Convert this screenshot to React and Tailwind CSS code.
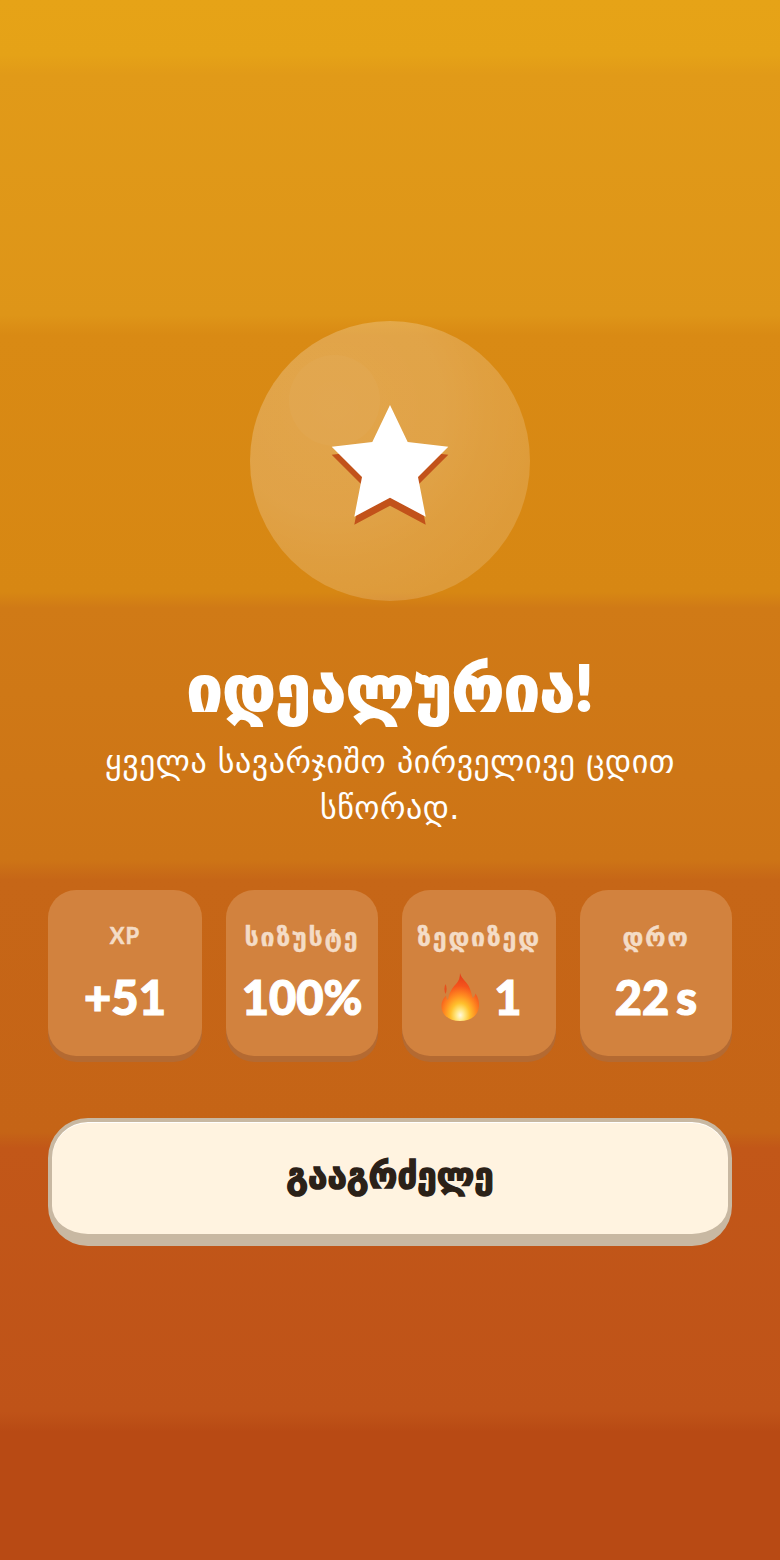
const stats = [
  { label: "XP", latin: true, value: "+51" },
  { label: "სიზუსტე", value: "100%" },
  { label: "ზედიზედ", fire: true, value: "1" },
  { label: "დრო", time: true, value: "22" },
];

function Star() {
  const pts = "58,0 75.7,37 116.3,41.7 86,72 93.7,111.7 58,92.7 22.3,111.7 30,72 -0.3,41.7 40.3,37";
  return (
    <svg width="116" height="122" viewBox="0 0 116 122" className="block overflow-visible">
      <polygon points={pts} fill="#c2521a" transform="translate(0 8)" />
      <polygon points={pts} fill="#ffffff" />
    </svg>
  );
}

function Flame() {
  return (
    <svg width="38" height="48" viewBox="0 0 38 48" className="ml-[5px] mr-[15px] block">
      <defs>
        <radialGradient id="fl" cx="50%" cy="88%" r="85%">
          <stop offset="0%" stopColor="#fff8e0" />
          <stop offset="14%" stopColor="#ffe680" />
          <stop offset="30%" stopColor="#ffc02c" />
          <stop offset="50%" stopColor="#ff8a20" />
          <stop offset="72%" stopColor="#f5541c" />
          <stop offset="100%" stopColor="#e43c18" />
        </radialGradient>
      </defs>
      <path d="M4.5 11 C3 14 3 18 4.5 21 C6 18 6 14 4.5 11 Z" fill="#e8501c" />
      <path
        d="M19 0 C20 6 27 9 29 16 C30.5 20 31 23 31.5 25 C33 24 34 23 34.5 20.5 C37 24 38 28 38 32 C38 42 30 48 19 48 C8 48 0.5 42 0.5 33 C0.5 28 3 25 5 22.5 C5 25 6 26 7 27 C8 20 11 15 15 11 C18 8 19 4 19 0 Z"
        fill="url(#fl)"
      />
    </svg>
  );
}

export default function App() {
  return (
    <div
      className="flex min-h-[1560px] w-[780px] flex-col items-center justify-center bg-[linear-gradient(180deg,#e6a317_0px,#e5a217_55px,#e19a18_75px,#de9518_315px,#d98a14_335px,#d78713_592px,#d07a16_608px,#cd7416_860px,#c66617_880px,#c56416_1132px,#c25718_1148px,#bf5318_1412px,#b84a14_1432px,#b84a14_1560px)] px-12 text-white"
      style={{ fontFamily: '"Lato","DejaVu Sans",sans-serif' }}
    >
      <div className="relative flex h-[280px] w-[280px] items-center justify-center overflow-hidden rounded-full bg-[radial-gradient(circle_at_30%_30%,rgba(255,255,255,0.235)_0%,rgba(255,255,255,0.22)_40%,rgba(255,255,255,0.19)_55%,rgba(255,255,255,0.16)_75%,rgba(255,255,255,0.155)_100%)]">
        <div className="absolute left-[39px] top-[34px] h-[91px] w-[91px] rounded-full bg-white/[0.03]" />
        <div className="relative top-[5px]"><Star /></div>
      </div>
      <h1 className="mt-[42px] text-[63.5px] font-black leading-[88px] [-webkit-text-stroke:2px_white]">იდეალურია!</h1>
      <p className="mt-[8px] max-w-[600px] text-center text-[32px] font-normal leading-[46px] tracking-[0.5px]" style={{ fontFamily: '"DejaVu Sans",sans-serif' }}>
        ყველა სავარჯიშო პირველივე ცდით სწორად.
      </p>
      <div className="mt-[59px] grid w-full grid-cols-[154px_152px_154px_152px] gap-6">
        {stats.map((s) => (
          <div key={s.label} className="flex h-[166px] flex-col items-center rounded-[28px] bg-[#d2823e] pt-[32px] shadow-[0_6px_0_#b46a32]">
            <div className={s.latin ? "text-[22px] font-bold leading-[28px] tracking-[1px] text-[#f4dcc6] [-webkit-text-stroke:0.5px_#f4dcc6]" : "whitespace-nowrap text-[25px] font-bold leading-[28px] tracking-[1.8px] text-[#f4dcc6] [-webkit-text-stroke:0.4px_#f4dcc6]"}>{s.label}</div>
            <div className="mt-[19px] flex h-[56px] items-center whitespace-nowrap text-[47px] font-black leading-[56px] [-webkit-text-stroke:1.2px_white]">
              {s.fire && <Flame />}
              {s.value}
              {s.time && <span className="ml-[7px]">s</span>}
            </div>
          </div>
        ))}
      </div>
      <button className="mt-[62px] mb-[-6px] h-[128px] w-full rounded-[40px] border-x-4 border-t-4 border-b-[12px] border-[#c8b8a2] bg-[#fff3e0] text-[35px] font-black text-[#2b2118] shadow-[inset_0_1px_0_#ffffff] [-webkit-text-stroke:1.5px_#2b2118]">
        <span className="relative top-[-3px]">გააგრძელე</span>
      </button>
    </div>
  );
}
